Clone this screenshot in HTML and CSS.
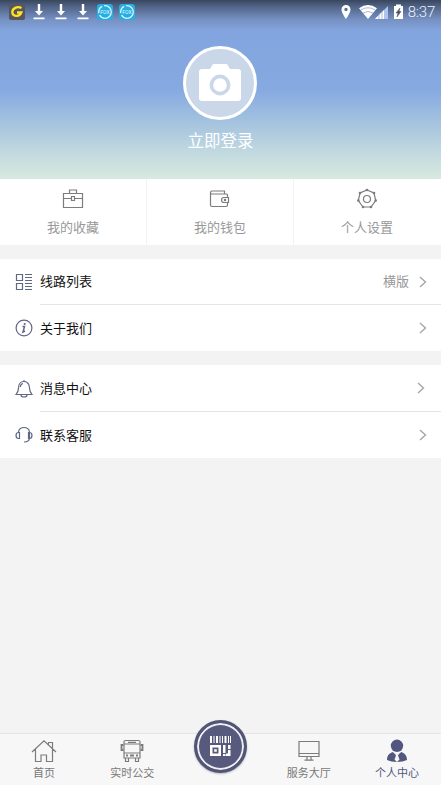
FILE: index.html
```html
<!DOCTYPE html>
<html lang="zh-CN">
<head>
<meta charset="utf-8">
<title>个人中心</title>
<link rel="stylesheet" href="styles.css">
</head>
<body>
<div class="app">
  <header class="hero">
    <div class="status">
      <div class="notices">
        <svg width="16" height="16" viewBox="0 0 16 16"><rect width="16" height="16" rx="2" fill="#56565f"/><path d="M12.500 4C8 1.800 3.500 4.500 3.300 8c0 4.500 7 5.500 9 .5H8" fill="none" stroke="#ffe51f" stroke-width="2.300"/></svg>
        <svg width="12" height="16" viewBox="0 0 12 16"><path d="M4.800 0h2.400v7H10l-4 4.500L2 7h2.800zM.5 13.500h11v1.700H.5z" fill="#fff"/></svg>
        <svg width="12" height="16" viewBox="0 0 12 16"><path d="M4.800 0h2.400v7H10l-4 4.500L2 7h2.800zM.5 13.500h11v1.700H.5z" fill="#fff"/></svg>
        <svg width="12" height="16" viewBox="0 0 12 16"><path d="M4.800 0h2.400v7H10l-4 4.500L2 7h2.800zM.5 13.500h11v1.700H.5z" fill="#fff"/></svg>
        <svg class="fox" width="16" height="16" viewBox="0 0 16 16"><rect width="16" height="16" rx="3" fill="#27aee0"/><circle cx="8" cy="8" r="6.300" fill="none" stroke="#d5f4ff" stroke-width="1.300" stroke-dasharray="16 2 8 2"/><text x="8" y="10" text-anchor="middle">FOX</text></svg>
        <svg class="fox" width="16" height="16" viewBox="0 0 16 16"><rect width="16" height="16" rx="3" fill="#27aee0"/><circle cx="8" cy="8" r="6.300" fill="none" stroke="#d5f4ff" stroke-width="1.300" stroke-dasharray="16 2 8 2"/><text x="8" y="10" text-anchor="middle">FOX</text></svg>
      </div>
      <div class="system">
        <svg width="62" height="16" viewBox="0 0 62 16"><path fill="#fff" fill-rule="evenodd" d="M5 1a4.500 4.500 0 0 0-4.500 4.500C.5 9 5 15 5 15s4.500-6 4.500-9.500A4.500 4.500 0 0 0 5 1zm0 2.800a1.700 1.700 0 1 1 0 3.400 1.700 1.700 0 0 1 0-3.400z"/><path d="M18 4.300q9-6.500 18 0L27 15z" fill="#fff"/><path d="M19.500 6q7.500-4.500 15 0M22 9q5-3 10 0" fill="none" stroke="#7189b5" stroke-width=".6"/><path d="M47 2v13H34z" fill="#aec4ec"/><path d="M43 6v9h-9z" fill="#fff"/><path d="M38 9v6M41 7v8" stroke="#7f9ed0" stroke-width=".7"/><path d="M53 2h2V.5h5V2h2v13h-9z" fill="#fff"/><path d="M59 4l-4 5h2l-1 4 4-5.500h-2z" fill="#4b5263" stroke="#4b5263" stroke-width=".5"/></svg>
        <span class="clock">8:37</span>
      </div>
    </div>
    <div class="avatar">
      <svg width="42" height="38" viewBox="0 0 42 38"><path d="M3 5h8l3-5h14l3 5h8q3 0 3 3v26q0 3-3 3H3q-3 0-3-3V8q0-3 3-3z" fill="#fff"/><circle cx="21" cy="21" r="8.600" fill="#fff" stroke="#c9d7e9" stroke-width="3.600"/></svg>
    </div>
    <div class="login">立即登录</div>
  </header>

  <section class="shortcuts">
    <div class="shortcut">
      <svg class="line" width="22" height="22" viewBox="0 0 22 22"><path d="M1.500 5.500h19v14h-19zM7.500 5V2h7v3M1.500 10.500H9m4 0h7.500M9.500 8.500h3v4h-3z"/></svg>
      <span>我的收藏</span>
    </div>
    <div class="shortcut">
      <svg class="line" width="22" height="22" viewBox="0 0 22 22"><path d="M18.500 9V7q0-1-1-1h-15q-1 0-1-1.300Q1.500 3 3 3h12.500v3M1.500 5v12q0 1.500 1.500 1.500h14q1.500 0 1.500-1.500v-2M19.500 9.500H15a2.500 2.500 0 0 0 0 5h4.500z"/><circle cx="16" cy="12" r=".7"/></svg>
      <span>我的钱包</span>
    </div>
    <div class="shortcut">
      <svg class="line" width="22" height="22" viewBox="0 0 22 22"><path d="M11 2l7 3 1.700 7.500L15 19H7l-4.700-6.500L4 5z"/><circle cx="11" cy="11" r="3.500"/><g class="dots"><circle cx="11" cy="2" r="1.300"/><circle cx="18" cy="5" r="1.300"/><circle cx="19.700" cy="12.500" r="1.300"/><circle cx="15" cy="19" r="1.300"/><circle cx="7" cy="19" r="1.300"/><circle cx="2.300" cy="12.500" r="1.300"/><circle cx="4" cy="5" r="1.300"/></g></svg>
      <span>个人设置</span>
    </div>
  </section>

  <section class="list">
    <div class="row">
      <svg class="rowicon" width="18" height="18" viewBox="0 0 18 18"><path d="M1.500 1.500h6v6h-6zM1.500 10.500h6v6h-6zM10 1.500h7M10 4.500h7M10 7.500h7M10 10.500h7M10 13.500h7M10 16.500h7"/></svg>
      <div class="rowbody"><span class="label">线路列表</span><span class="value">横版</span><svg class="chevron" width="8" height="12" viewBox="0 0 8 12"><path d="M1 1l5.500 5L1 11"/></svg></div>
    </div>
    <div class="row">
      <svg class="rowicon" width="18" height="18" viewBox="0 0 18 18"><circle cx="9" cy="9" r="7.900"/><path d="M7.500 7.500h2L8 13l2-1" stroke-width="1.500"/><circle cx="9.700" cy="5" r=".5"/></svg>
      <div class="rowbody"><span class="label">关于我们</span><svg class="chevron" width="8" height="12" viewBox="0 0 8 12"><path d="M1 1l5.500 5L1 11"/></svg></div>
    </div>
  </section>

  <section class="list lower">
    <div class="row">
      <svg class="rowicon" width="18" height="18" viewBox="0 0 18 18"><path d="M9 1.500C5 1.500 3.500 5 3.500 8c0 3-.5 4-2.500 6.500h16C15 12 14.500 11 14.500 8c0-3-1.500-6.500-5.500-6.500zM6 15q0 2 3 2t3-2M8 1h2M5.300 7Q5.500 4 8 3.500"/></svg>
      <div class="rowbody"><span class="label">消息中心</span><svg class="chevron inset" width="8" height="12" viewBox="0 0 8 12"><path d="M1 1l5.500 5L1 11"/></svg></div>
    </div>
    <div class="row">
      <svg class="rowicon" width="18" height="18" viewBox="0 0 18 18"><path d="M3.500 6C4 2.500 6.500 1.500 9 1.500S14 2.500 14.500 6v5.500c0 3-2 4.500-5.500 4.500M4.500 6.500v6h-1C.2 12.500.2 6.500 3.500 6.500zM13.500 6.500v6h1c3.300 0 3.300-6 0-6z"/></svg>
      <div class="rowbody"><span class="label">联系客服</span><svg class="chevron" width="8" height="12" viewBox="0 0 8 12"><path d="M1 1l5.500 5L1 11"/></svg></div>
    </div>
  </section>

  <nav class="tabs">
    <div class="tab">
      <svg class="line" width="26" height="24" viewBox="0 0 26 24"><path d="M1 13L13 1.800 25 13M4.500 10v12.500H10V16h5.500v6.500h6V10M17.500 5.500V3.500h4V9"/></svg>
      <span>首页</span>
    </div>
    <div class="tab">
      <svg class="line" width="26" height="24" viewBox="0 0 26 24"><path d="M5 3q0-1.500 1.500-1.500h13Q21 1.500 21 3v16H5zM5 5h16M5 14h16M9 3.300h8M6.500 19v3.500h3V19m7 0v3.500h3V19"/><path d="M4.500 6h-2v5h2M21.500 6h2v5h-2" stroke-width="1.800"/><path d="M7 16.500h2m2 0h4m2 0h2" stroke-width="2"/></svg>
      <span>实时公交</span>
    </div>
    <div class="tab scan">
      <div class="disc">
        <svg width="21" height="21" viewBox="0 0 21 21"><path fill="#fff" fill-rule="evenodd" d="M0 0h2v7H0zm3.500 0h1v7h-1zM6 0h2v7H6zm3.500 0h1v7h-1zM12 0h1v7h-1zm2.500 0h2v7h-2zM18 0h1v7h-1zm2 0h1v7h-1zM0 9h11v11H0zm2.500 2.500v6h6v-6zM4.200 13.200h2.600v2.600H4.200zM13 9h2.500v8H13zm0 9h2.500v2H13zm5-9h2.500v4H18zm0 5h2.500v6H16v-2.500h2z"/></svg>
      </div>
    </div>
    <div class="tab">
      <svg class="line" width="26" height="24" viewBox="0 0 26 24"><path d="M3 2.500h20v15H3zM3 14.500h20M11 17.500V21m4-3.500V21M8.500 21.200h9"/></svg>
      <span>服务大厅</span>
    </div>
    <div class="tab active">
      <svg width="26" height="24" viewBox="0 0 26 24"><circle cx="13" cy="6.800" r="6.200"/><path d="M8.500 13L13 16l4.500-3c4 1.500 5.500 4.500 5.500 8q-4 2-10 2T3 21c0-3.500 1.500-6.500 5.500-8z"/><path d="M10 13.500l3 2 3-2-2 3 1.500 4-2.500 2.500-2.500-2.500 1.500-4z" fill="#f7f7f8"/></svg>
      <span>个人中心</span>
    </div>
  </nav>
</div>
</body>
</html>
```

FILE: styles.css
```css
* { box-sizing: border-box; }
body {
  margin: 0;
  background: #f3f3f3;
  font-family: Roboto, "Noto Sans CJK SC", sans-serif;
}
svg { display: block; flex: none; }
.app { height: 785px; display: flex; flex-direction: column; overflow: hidden; }

.hero {
  height: 179px;
  flex: none;
  display: flex;
  flex-direction: column;
  align-items: center;
  background: linear-gradient(#39475d 0, #52658a 7px, #7792c4 20px, #83a5df 31px, #86a9e1 90px, #a2c1df 120px, #bfd7df 150px, #d8e9df 179px);
}
.status {
  align-self: stretch;
  height: 24px;
  flex: none;
  display: flex;
  justify-content: space-between;
  align-items: center;
  padding: 0 6px 0 9px;
}
.notices { display: flex; align-items: center; gap: 10px; }
.notices svg:nth-child(2) { margin-left: -2px; }
.notices .fox { margin-left: -2px; }
.notices .fox + .fox { margin-left: -4px; }
.fox text { font: 5px Roboto, sans-serif; fill: #e4f8ff; }
.system { display: flex; align-items: center; gap: 5px; }
.clock { font-size: 15px; line-height: 24px; color: #eef3fd; letter-spacing: -0.2px; font-weight: 300; }
.avatar {
  width: 74px;
  height: 74px;
  flex: none;
  margin: 22px 1px 0 0;
  border: 3px solid #fff;
  border-radius: 50%;
  background: #c9d7e9;
  display: flex;
  align-items: center;
  justify-content: center;
}
.login { margin-top: 10px; font-size: 16.5px; line-height: 24px; color: #fff; }

.shortcuts {
  display: grid;
  grid-template-columns: repeat(3, 1fr);
  height: 66px;
  flex: none;
  background: #fff;
}
.shortcut {
  display: flex;
  flex-direction: column;
  align-items: center;
  padding-top: 9px;
  gap: 8px;
  font-size: 13px;
  line-height: 20px;
  color: #999;
  border-right: 1px solid #f3f3f3;
}
.shortcut:last-child { border-right-color: #fff; }
.line { fill: none; stroke: #7c7c7c; stroke-width: 1.2; }
.dots { fill: #7c7c7c; stroke: none; }

.list { margin-top: 14px; background: #fff; flex: none; }
.row { height: 46px; display: flex; align-items: center; padding-left: 15px; }
.lower .row:first-child { height: 47px; }
.rowicon { fill: none; stroke: #5f6883; stroke-width: 1.2; }
.rowbody {
  flex: 1;
  align-self: stretch;
  display: flex;
  align-items: center;
  margin-left: 7px;
  padding-right: 14px;
}
.row:first-child .rowbody { border-bottom: 1px solid #e4e4e4; }
.label { flex: 1; padding-top: 1px; font-size: 13px; line-height: 20px; color: #111; }
.value { margin-right: 10px; padding-top: 1px; font-size: 13px; line-height: 20px; color: #999; }
.chevron { fill: none; stroke: #a6a6a6; stroke-width: 1.4; }
.chevron.inset { margin-right: 2px; }

.tabs {
  display: grid;
  grid-template-columns: repeat(5, 1fr);
  height: 52px;
  flex: none;
  margin-top: auto;
  background: #f7f7f8;
  border-top: 1px solid #e5e5e7;
}
.tab {
  display: flex;
  flex-direction: column;
  align-items: center;
  padding-top: 5px;
  gap: 3px;
  font-size: 11px;
  line-height: 16px;
  color: #777;
}
.active { color: #535780; fill: #535780; }
.scan { padding: 0; }
.disc {
  width: 53px;
  height: 53px;
  margin-top: -14px;
  border: 3px solid #535576;
  border-radius: 50%;
  background: #575a7c;
  box-shadow: inset 0 0 0 2px #eeeef5, 0 1px 2px #b9b9c6;
  display: flex;
  align-items: center;
  justify-content: center;
}
```
